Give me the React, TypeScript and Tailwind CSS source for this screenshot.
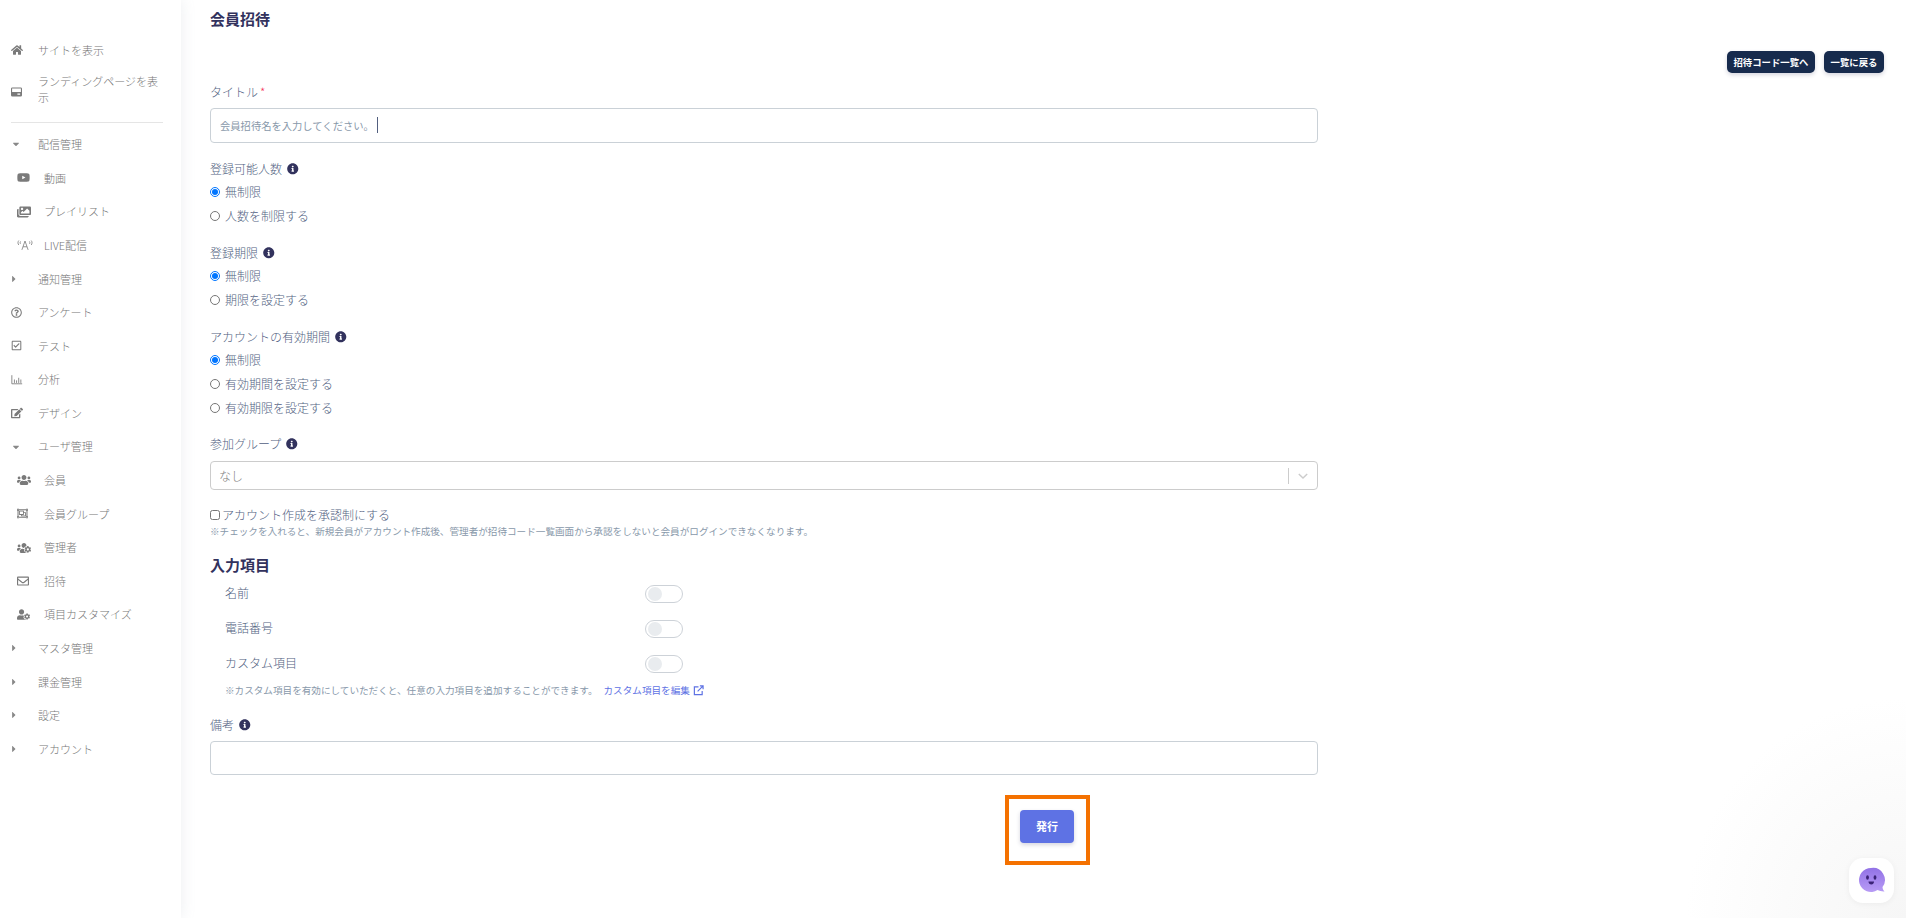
import type { ReactNode } from "react";
import {
  FaCaretDown,
  FaCaretRight,
  FaEdit,
  FaHome,
  FaImages,
  FaInfoCircle,
  FaRegCheckSquare,
  FaRegEnvelope,
  FaRegObjectGroup,
  FaRegQuestionCircle,
  FaUserCog,
  FaUsers,
  FaUsersCog,
  FaYoutube,
} from "react-icons/fa";

function BarsIcon() {
  return (
    <svg viewBox="0 0 14 12" className="w-[12px] h-[11px]" fill="none" stroke="currentColor" strokeWidth="1">
      <path d="M1 1v10h12M4 10V6M6.5 10V7M9 10V4M11.500 10V6" />
    </svg>
  );
}

function LiveIcon() {
  return (
    <svg viewBox="0 0 18 12" className="w-[16px] h-[12px]" fill="none" stroke="currentColor" strokeWidth="0.9">
      <path d="M2 1C.8 2.500.8 4.500 2 6M4 2C3.400 3 3.400 3.800 4 4.800M16 1c1.200 1.500 1.200 3.500 0 5M14 2c.6 1 .6 1.800 0 2.800M5.500 11.500 9 1.500l3.500 10M6.800 8h4.400" />
    </svg>
  );
}

function LandingIcon() {
  return (
    <svg viewBox="0 0 12 10" className="w-[11px] h-[10px]" fill="currentColor">
      <path d="M1.500 0h9A1.500 1.500 0 0 1 12 1.500v7A1.500 1.500 0 0 1 10.500 10h-9A1.500 1.500 0 0 1 0 8.500v-7A1.500 1.500 0 0 1 1.500 0zM1.200 1.200v3.900h9.600V1.200zM7 6.500v1.500h3V6.500z" fillRule="evenodd" />
    </svg>
  );
}

function ExternalIcon() {
  return (
    <svg viewBox="0 0 12 12" className="w-[11px] h-[11px]" fill="none" stroke="currentColor" strokeWidth="1.300">
      <path d="M6 2H1.500v8.500H10V6.500M5 7l6-6M7.500 1H11v3.500" />
    </svg>
  );
}

function NavRow({ icon, label, sub }: { icon: ReactNode; label: string; sub?: boolean }) {
  return (
    <div className={`flex items-center h-[33.6px] ${sub ? "pl-[17px]" : "pl-[11px]"}`}>
      <span className="flex items-center shrink-0 w-[27px] text-[#7a7a7a] text-[11px]">{icon}</span>
      <span>{label}</span>
    </div>
  );
}

function Caret({ open }: { open?: boolean }) {
  return open ? <FaCaretDown className="text-[10px] text-[#888888]" /> : <FaCaretRight className="text-[10px] -ml-[2px] text-[#888888]" />;
}

function Sidebar() {
  return (
    <aside className="w-[181px] shrink-0 bg-white pt-[33px] text-[11px] font-light text-[#777777] shadow-[0_0_14px_rgba(136,152,170,0.16)] z-10">
      <NavRow icon={<FaHome className="text-[12px]" />} label="サイトを表示" />
      <div className="flex items-center h-[50px] pl-[11px]">
        <span className="flex items-center shrink-0 w-[27px] text-[#7a7a7a]">
          <LandingIcon />
        </span>
        <span className="w-[122px] leading-[16px] -mt-[5px]">ランディングページを表示</span>
      </div>
      <div className="h-px bg-[#e5e5e5] ml-[11px] mr-[18px] my-[5px]" />
      <NavRow icon={<Caret open />} label="配信管理" />
      <NavRow sub icon={<FaYoutube className="text-[13px]" />} label="動画" />
      <NavRow sub icon={<FaImages className="text-[14px]" />} label="プレイリスト" />
      <NavRow sub icon={<LiveIcon />} label="LIVE配信" />
      <NavRow icon={<Caret />} label="通知管理" />
      <NavRow icon={<FaRegQuestionCircle />} label="アンケート" />
      <NavRow icon={<FaRegCheckSquare />} label="テスト" />
      <NavRow icon={<BarsIcon />} label="分析" />
      <NavRow icon={<FaEdit className="text-[12px]" />} label="デザイン" />
      <NavRow icon={<Caret open />} label="ユーザ管理" />
      <NavRow sub icon={<FaUsers className="text-[14px]" />} label="会員" />
      <NavRow sub icon={<FaRegObjectGroup />} label="会員グループ" />
      <NavRow sub icon={<FaUsersCog className="text-[14px]" />} label="管理者" />
      <NavRow sub icon={<FaRegEnvelope className="text-[12px]" />} label="招待" />
      <NavRow sub icon={<FaUserCog className="text-[13px]" />} label="項目カスタマイズ" />
      <NavRow icon={<Caret />} label="マスタ管理" />
      <NavRow icon={<Caret />} label="課金管理" />
      <NavRow icon={<Caret />} label="設定" />
      <NavRow icon={<Caret />} label="アカウント" />
    </aside>
  );
}

function FieldLabel({ text, info }: { text: string; info?: boolean }) {
  return (
    <div className="flex items-center gap-[5px] h-5 text-[12px] font-light text-[#525f7f]">
      <span>{text}</span>
      {info && <FaInfoCircle className="text-[11.5px] text-[#32325d]" />}
    </div>
  );
}

function RadioRow({ name, label, checked }: { name: string; label: string; checked?: boolean }) {
  return (
    <label className="flex items-center h-6 text-[12px] font-light text-[#525f7f]">
      <input type="radio" name={name} defaultChecked={checked} className="m-0 mr-[5px] w-[10px] h-[10px]" />
      <span>{label}</span>
    </label>
  );
}

function ToggleRow({ label }: { label: string }) {
  return (
    <div className="flex items-center h-[35px] pl-[15px] text-[12px] font-light text-[#525f7f]">
      <span className="w-[420px] -mt-[2px]">{label}</span>
      <span className="flex items-center w-[38px] h-[18px] px-[2px] rounded-full border border-[#cdd2d8] bg-white">
        <span className="w-[14px] h-[14px] rounded-full bg-[#e9ecef]" />
      </span>
    </div>
  );
}

export default function App() {
  return (
    <div className="flex h-[918px] overflow-hidden relative font-['Noto_Sans_CJK_JP',sans-serif] bg-[radial-gradient(circle_at_100%_100%,#f6f6f6,#ffffff_220px)]">
      <Sidebar />
      <main className="flex-1 min-w-0 pl-[29px] pr-[22px]">
        <h1 className="h-[38px] pt-[8px] text-[15px] leading-[22px] font-bold text-[#32325d]">会員招待</h1>
        <div className="flex justify-end gap-[9px] mt-[13px] h-[22px]">
          <button className="h-[22px] w-[88px] rounded-[5px] bg-[#172b4d] text-white text-[9.4px] font-bold shadow-[0_2px_4px_rgba(50,50,93,0.2)]">
            招待コード一覧へ
          </button>
          <button className="h-[22px] w-[60px] rounded-[5px] bg-[#172b4d] text-white text-[9.4px] font-bold shadow-[0_2px_4px_rgba(50,50,93,0.2)]">
            一覧に戻る
          </button>
        </div>

        <div className="w-[1108px] mt-[9px]">
          <div className="flex items-center h-5 text-[12px] font-light text-[#525f7f]">
            タイトル<span className="text-[#f5365c] ml-[2px]">*</span>
          </div>
          <div className="relative mt-[6px]">
            <input
              placeholder="会員招待名を入力してください。"
              className="block w-full h-[35px] px-[9px] rounded-[4px] border border-[#cad1d7] bg-white text-[10.3px] placeholder:text-[#8898aa] outline-none"
            />
            <span className="absolute left-[167px] top-[9px] w-px h-[16px] bg-[#525f7f]" />
          </div>

          <div className="mt-[16px]">
            <FieldLabel text="登録可能人数" info />
            <div className="mt-px">
              <RadioRow name="limit" label="無制限" checked />
              <RadioRow name="limit" label="人数を制限する" />
            </div>
          </div>

          <div className="mt-[15px]">
            <FieldLabel text="登録期限" info />
            <div className="mt-px">
              <RadioRow name="deadline" label="無制限" checked />
              <RadioRow name="deadline" label="期限を設定する" />
            </div>
          </div>

          <div className="mt-[15px]">
            <FieldLabel text="アカウントの有効期間" info />
            <div className="mt-px">
              <RadioRow name="expire" label="無制限" checked />
              <RadioRow name="expire" label="有効期間を設定する" />
              <RadioRow name="expire" label="有効期限を設定する" />
            </div>
          </div>

          <div className="mt-[14px]">
            <FieldLabel text="参加グループ" info />
            <div className="flex items-center h-[29px] mt-[7px] pl-[8px] rounded-[4px] border border-[#cccccc] text-[12px] font-light text-[#808080]">
              <span className="flex-1">なし</span>
              <span className="w-px h-[16px] bg-[#cccccc]" />
              <svg viewBox="0 0 20 20" className="w-[14px] h-[14px] mx-[7px] text-[#cccccc]" fill="none" stroke="currentColor" strokeWidth="2">
                <path d="M4 7l6 6 6-6" />
              </svg>
            </div>
          </div>

          <label className="flex items-center h-[18px] mt-[16px] text-[12px] font-light text-[#525f7f]">
            <input type="checkbox" className="m-0 mr-[2px] w-[10px] h-[10px]" />
            <span>アカウント作成を承認制にする</span>
          </label>
          <p className="h-[14px] leading-[14px] text-[9.6px] text-[#8898aa]">
            ※チェックを入れると、新規会員がアカウント作成後、管理者が招待コード一覧画面から承認をしないと会員がログインできなくなります。
          </p>

          <h2 className="h-[24px] mt-[15px] text-[15px] leading-[24px] font-bold text-[#32325d]">入力項目</h2>
          <div className="-mt-[1px]">
            <ToggleRow label="名前" />
            <ToggleRow label="電話番号" />
            <ToggleRow label="カスタム項目" />
          </div>
          <div className="flex items-center h-[16px] mt-[1px] pl-[15px] text-[9.6px] text-[#8898aa]">
            <span>※カスタム項目を有効にしていただくと、任意の入力項目を追加することができます。</span>
            <span className="ml-[6px] text-[#5e72e4]">カスタム項目を編集</span>
            <span className="ml-[3px] text-[#5e72e4]">
              <ExternalIcon />
            </span>
          </div>

          <div className="mt-[17px]">
            <FieldLabel text="備考" info />
            <textarea className="block w-full h-[34px] mt-[6px] rounded-[4px] border border-[#cad1d7] bg-white outline-none resize-none" />
          </div>

          <div className="ml-[795px] mt-[20px] w-[85px] h-[70px] border-4 border-[#f47100] pt-[11px] pl-[11px]">
            <button className="block w-[54px] h-[33px] rounded-[4px] bg-[#5e72e4] text-white text-[11px] font-bold shadow-[0_2px_4px_rgba(50,50,93,0.2)]">
              発行
            </button>
          </div>
        </div>
      </main>

      <div className="absolute right-[12px] bottom-[15px] w-[45px] h-[45px] rounded-[14px] bg-white flex items-center justify-center shadow-[0_1px_6px_rgba(0,0,0,0.05)]">
        <svg viewBox="0 0 28 28" className="w-[28px] h-[28px]">
          <defs>
            <linearGradient id="chatFill" x1="0" y1="0" x2="0" y2="1">
              <stop offset="0" stopColor="#9272e6" />
              <stop offset="1" stopColor="#b79bf5" />
            </linearGradient>
          </defs>
          <path d="M13 1a12 12 0 1 0 6.500 22.100c2 .9 4.500 1.600 7 1.400-1.200-1.200-1.900-2.800-2-4.500A12 12 0 0 0 13 1z" fill="url(#chatFill)" />
          <ellipse cx="9.500" cy="10.500" rx="1.400" ry="2.300" fill="#3a2276" />
          <ellipse cx="17" cy="10.500" rx="1.400" ry="2.300" fill="#3a2276" />
          <path d="M10.500 14.500h5.500c0 2-1.200 3-2.700 3s-2.800-1-2.800-3z" fill="#3a2276" />
        </svg>
      </div>
    </div>
  );
}
